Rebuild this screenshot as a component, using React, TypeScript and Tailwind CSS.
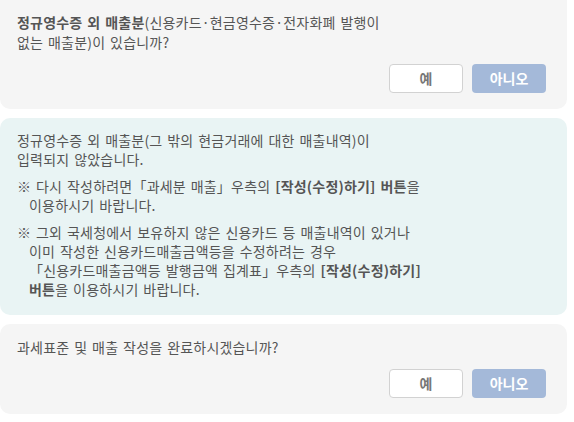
import React from "react";

const font = "font-['Noto_Sans_CJK_KR','Noto_Sans',sans-serif]";

function Buttons() {
  return (
    <div className="flex justify-end gap-[9px] mt-[12px]">
      <button className="w-[74px] h-[29px] rounded-[4px] border border-[#d2d2d2] bg-white text-[14px] font-bold text-[#777] tracking-normal">
        예
      </button>
      <button className="w-[74px] h-[29px] rounded-[4px] bg-[#a4b9d9] text-[14px] font-bold text-white tracking-normal">
        아니오
      </button>
    </div>
  );
}

export default function App() {
  return (
    <div className={`w-[574px] h-[422px] bg-white text-[14px] leading-[19px] tracking-[0.2px] [word-spacing:1.5px] text-[#555] ${font}`}>
      {/* 질문 1 */}
      <div className="w-[567px] bg-[#f5f5f5] rounded-b-[10px] pl-[17px] pr-[21px] pt-[12px] pb-[16px]">
        <p className="leading-[20px]">
          <b className="font-bold">정규영수증 외 매출분</b>(신용카드·현금영수증·전자화폐 발행이
          <br />
          없는 매출분)이 있습니까?
        </p>
        <Buttons />
      </div>

      {/* 안내 */}
      <div className="w-[567px] mt-[9px] bg-[#e9f4f4] rounded-[10px] pl-[17px] pr-[21px] pt-[13px] pb-[16px]">
        <p>
          정규영수증 외 매출분(그 밖의 현금거래에 대한 매출내역)이
          <br />
          입력되지 않았습니다.
        </p>
        <p className="mt-[8px] pl-[12px] -indent-[12px]">
          ※ 다시 작성하려면「과세분 매출」우측의 <b className="font-bold">[작성(수정)하기] 버튼</b>을
          <br />
          이용하시기 바랍니다.
        </p>
        <p className="mt-[8px] pl-[12px] -indent-[12px]">
          ※ 그외 국세청에서 보유하지 않은 신용카드 등 매출내역이 있거나
          <br />
          이미 작성한 신용카드매출금액등을 수정하려는 경우
          <br />
          「신용카드매출금액등 발행금액 집계표」우측의 <b className="font-bold">[작성(수정)하기]</b>
          <br />
          <b className="font-bold">버튼</b>을 이용하시기 바랍니다.
        </p>
      </div>

      {/* 질문 2 */}
      <div className="w-[567px] mt-[9px] bg-[#f5f5f5] rounded-[10px] pl-[17px] pr-[21px] pt-[14px] pb-[16px]">
        <p>과세표준 및 매출 작성을 완료하시겠습니까?</p>
        <Buttons />
      </div>
    </div>
  );
}
